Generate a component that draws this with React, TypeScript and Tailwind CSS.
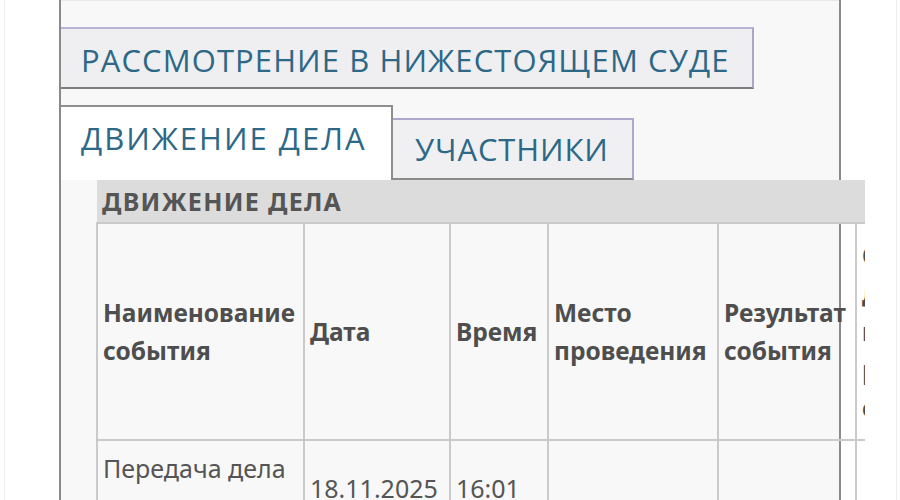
import React from "react";

const tabFont = { fontFamily: '"Open Sans", "Noto Sans", sans-serif' };
const bodyFont = { fontFamily: '"Noto Sans", "Open Sans", sans-serif' };

const headCell =
  "border-2 border-[#cacaca] align-middle px-[5px] text-left font-bold text-[#4e4e4e] text-[24.5px] leading-[38px]";
const dataCell =
  "border-2 border-[#cacaca] align-middle px-[5px] py-[7px] text-left font-normal text-[#555] text-[25px] leading-[40px]";

export default function App() {
  return (
    <div className="w-[900px] h-[500px] overflow-hidden bg-white flex">
      <div className="w-[5px] shrink-0 border-r border-[#eeeeee]" />
      <div className="ml-[54px] w-[782px] shrink-0 border-x-2 border-[#8a8a8a] bg-[#f8f8f8] flex flex-col">
        <div className="h-[27px] shrink-0 border-t border-[#e8e8e8]" />

        {/* lower court tab */}
        <div
          className="w-[693px] h-[62px] shrink-0 bg-[#efeff1] border-t-2 border-r-2 border-t-[#b8b4d6] border-r-[#aaa6ca] border-b-2 border-b-[#7c7c7c] flex items-center pl-[20px] pt-[4px] text-[31px] tracking-[1.1px] text-[#2d6887]"
          style={tabFont}
        >
          РАССМОТРЕНИЕ В НИЖЕСТОЯЩЕМ СУДЕ
        </div>

        <div className="h-[16px] shrink-0" />

        {/* tabs */}
        <div className="h-[75px] shrink-0 flex items-end" style={tabFont}>
          <div className="w-[332px] h-full bg-white border-t-2 border-r-2 border-[#8e8e8e] flex items-center pl-[20px] pb-[10px] text-[31px] tracking-[2px] text-[#2d6887]">
            ДВИЖЕНИЕ ДЕЛА
          </div>
          <div className="w-[241px] h-[62px] bg-[#f0f0f2] border-t-2 border-r-2 border-t-[#aca8cc] border-r-[#aca8cc] border-b-2 border-b-[#8a8a8a] flex items-center pl-[22px] text-[31px] tracking-[0.9px] text-[#2d6887]">
            УЧАСТНИКИ
          </div>
        </div>

        {/* table */}
        <div className="ml-[35px] w-[769px] shrink-0 overflow-hidden" style={bodyFont}>
          <table className="border-collapse table-fixed w-[1000px]">
            <colgroup>
              <col className="w-[207px]" />
              <col className="w-[146px]" />
              <col className="w-[98px]" />
              <col className="w-[170px]" />
              <col className="w-[138px]" />
              <col className="w-[241px]" />
            </colgroup>
            <tbody>
              <tr>
                <td
                  colSpan={6}
                  className="h-[42px] bg-[#dcdcdc] px-[5px] text-[25px] tracking-[1.3px] font-bold text-[#555] leading-[42px]"
                >
                  ДВИЖЕНИЕ ДЕЛА
                </td>
              </tr>
              <tr className="h-[217px]">
                <th className={headCell}>Наименование события</th>
                <th className={headCell}>Дата</th>
                <th className={headCell}>Время</th>
                <th className={headCell}>Место проведения</th>
                <th className={headCell}>Результат события</th>
                <th className={headCell}>
                  Основание
                  <br />
                  для
                  <br />
                  выбранного
                  <br />
                  результата
                  <br />
                  события
                </th>
              </tr>
              <tr>
                <td className={dataCell}>Передача дела судье</td>
                <td className={dataCell}>18.11.2025</td>
                <td className={dataCell}>16:01</td>
                <td className={dataCell}></td>
                <td className={dataCell}></td>
                <td className={dataCell}></td>
              </tr>
            </tbody>
          </table>
        </div>
      </div>
      <div className="ml-[55px] w-px shrink-0 bg-[#eeeeee]" />
    </div>
  );
}
